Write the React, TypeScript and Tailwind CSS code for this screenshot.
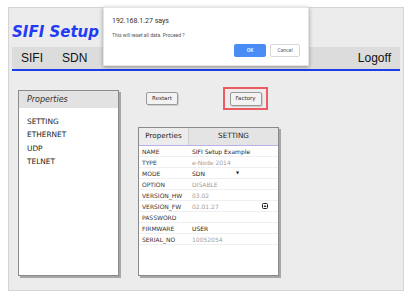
import React from "react";

type Row = { label: string; value: string; dim?: boolean; extra?: "select" | "icon" };

const rows: Row[] = [
  { label: "NAME", value: "SIFI Setup Example" },
  { label: "TYPE", value: "e-Node 2014", dim: true },
  { label: "MODE", value: "SDN", extra: "select" },
  { label: "OPTION", value: "DISABLE", dim: true },
  { label: "VERSION_HW", value: "03.02", dim: true },
  { label: "VERSION_FW", value: "02.01.27", dim: true, extra: "icon" },
  { label: "PASSWORD", value: "" },
  { label: "FIRMWARE", value: "USER" },
  { label: "SERIAL_NO", value: "10052054", dim: true },
];

const menu = ["SETTING", "ETHERNET", "UDP", "TELNET"];

const UpIcon = () => (
  <svg width="6" height="6" viewBox="0 0 6 6">
    <rect x="0.5" y="0.5" width="5" height="5" rx="1" fill="#fff" stroke="#222" />
    <path d="M1.5 4 L3 2 L4.5 4 Z" fill="#222" />
  </svg>
);

const App = () => {
  return (
    <div className="relative w-[419px] h-[299px] overflow-hidden bg-white pt-[7px] pl-[8px]">
      <div className="w-[396px] h-[284px] border border-[#d4d4d4] bg-[#ececec] px-[3px] flex flex-col">
        {/* header */}
        <div className="h-[39px] pt-[11px]">
          <span className="font-['DejaVu_Sans',sans-serif] text-[15px] leading-[18px] font-bold italic text-[#1f3cf2]">
            SIFI Setup
          </span>
        </div>

        {/* nav */}
        <div className="h-[22px] bg-[#dcdcdc] flex items-center px-[9px] font-['Liberation_Sans',sans-serif] text-[12px] text-[#111]">
          <span>SIFI</span>
          <span className="ml-[19px]">SDN</span>
          <span className="ml-auto">Logoff</span>
        </div>
        <div className="h-[2px] bg-[#1a3ee8]" />

        {/* content */}
        <div className="flex items-start pt-[16px] pl-[6px] font-['DejaVu_Sans',sans-serif]">
          <div className="mt-[3px] w-[101px] h-[186px] bg-white border border-[#8a8a8a] shadow-[2px_2px_0_#a6a6a6]">
            <div className="h-[17px] bg-[#e2e2e2] pl-[8px] flex items-center text-[8px] italic text-[#333]">
              Properties
            </div>
            <div className="mt-[7px] pl-[8px] text-[7.4px] leading-[13.4px] text-[#222]">
              {menu.map((m) => (
                <div key={m}>{m}</div>
              ))}
            </div>
          </div>

          <div className="ml-[19px] flex flex-col">
            <div className="flex items-center h-[23px]">
              <button className="ml-[8px] w-[32px] h-[13px] rounded-[2px] border border-[#999] bg-[#f2f2f2] text-[5.5px] text-[#333] shadow-[1px_1px_0_#cfcfcf]">
                Restart
              </button>
              <div className="ml-[45px] w-[45px] h-[23px] border-2 border-[#ec5a62] flex items-center justify-center">
                <button className="w-[32px] h-[14px] rounded-[2px] border border-[#999] bg-[#f2f2f2] text-[5.5px] text-[#333] shadow-[1px_1px_0_#cfcfcf]">
                  Factory
                </button>
              </div>
            </div>

            <div className="mt-[17px] w-[141px] h-[149px] bg-white border border-[#8a8a8a] shadow-[2px_2px_0_#a6a6a6]">
              <div className="flex h-[18px] border-b border-[#b9b0ea] text-[7.2px] text-[#222]">
                <div className="w-[50px] bg-[#ececec] flex items-center justify-center border-r border-[#d0d0d0]">
                  Properties
                </div>
                <div className="flex-1 bg-[#e4e4e4] flex items-center justify-center">SETTING</div>
              </div>
              {rows.map((r) => (
                <div key={r.label} className="flex items-center h-[11px] border-b border-[#efefef] text-[6px]">
                  <div className="w-[53px] pl-[3px] text-[#333]">{r.label}</div>
                  <div className={r.dim ? "text-[#a0a0a0]" : "text-[#222]"}>{r.value}</div>
                  {r.extra === "select" && <span className="ml-[31px] text-[4px] text-[#222]">▼</span>}
                  {r.extra === "icon" && (
                    <span className="ml-auto mr-[10px] flex">
                      <UpIcon />
                    </span>
                  )}
                </div>
              ))}
            </div>
          </div>
        </div>
      </div>

      {/* confirm dialog */}
      <div className="absolute left-[103px] top-[7px] w-[206px] h-[59px] bg-white border border-[#e4e4e4] shadow-[0_1px_4px_rgba(0,0,0,0.35)] font-['Roboto',sans-serif] flex flex-col pl-[8px] pr-[8px] pt-[9px]">
        <div className="text-[7px] leading-[9px] text-[#333]">192.168.1.27 says</div>
        <div className="mt-[6px] text-[5px] leading-[7px] text-[#555]">This will reset all data. Proceed ?</div>
        <div className="mt-[5px] flex justify-end gap-[4px]">
          <button className="w-[32px] h-[13px] rounded-[2px] bg-[#4a8cf5] text-[5px] font-medium text-white">OK</button>
          <button className="w-[30px] h-[13px] rounded-[2px] border border-[#d8d8d8] bg-white text-[5px] text-[#666]">
            Cancel
          </button>
        </div>
      </div>
    </div>
  );
};

export default App;
